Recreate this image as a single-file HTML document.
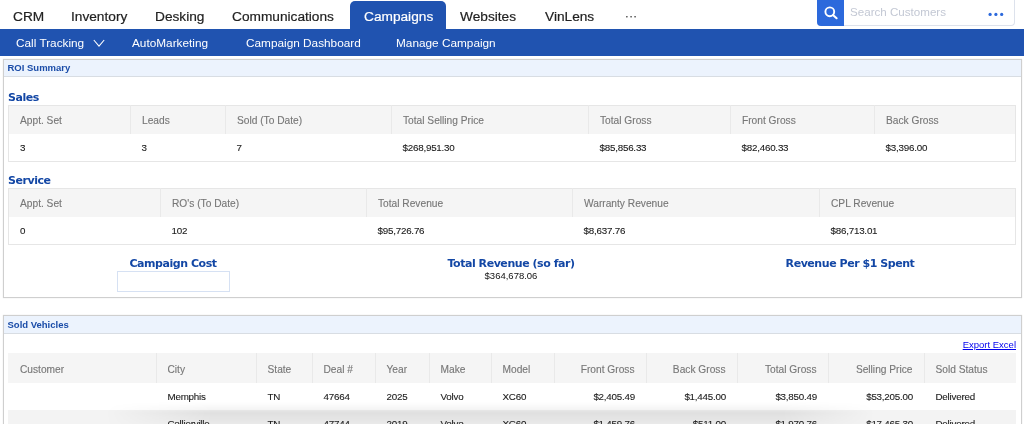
<!DOCTYPE html>
<html><head><meta charset="utf-8">
<style>
*{box-sizing:border-box;margin:0;padding:0}
html,body{width:1024px;height:424px;overflow:hidden;background:#fff;font-family:"Liberation Sans",sans-serif;}
body{position:relative}
#wrap{position:absolute;left:0;top:0;width:1024px;height:424px;overflow:hidden;will-change:transform}
.abs{position:absolute;white-space:nowrap}
#topnav{left:0;top:0;width:1024px;height:29px;background:#fff}
.tab{top:8px;font-size:13.7px;color:#222;-webkit-text-stroke:0.2px;line-height:18px}
#camp{left:350px;top:1px;width:96px;height:29px;background:#2053b0;border-radius:5px 5px 0 0}
#subnav{left:0;top:29px;width:1024px;height:27px;background:#2053b0}
.sub{top:35px;font-size:11.8px;color:#fff;line-height:16px}
.panel{background:#fff;border:1px solid #cfcfcf;box-shadow:0 0 1px #d8d8d8}
.phead{background:#ecf3fd;border-bottom:1px solid #d8dde3;height:16px;font-size:9.5px;font-weight:bold;color:#1a4ca8;line-height:15px;padding-left:3.5px}
.sect{font-family:"DejaVu Sans","Liberation Sans",sans-serif;font-weight:bold;font-size:11px;letter-spacing:-0.45px;color:#1347a5;line-height:14px}
table{border-collapse:collapse;table-layout:fixed;position:absolute}
th{background:#f5f5f5;font-weight:normal;color:#777;font-size:10.2px;-webkit-text-stroke:0.12px;text-align:left;padding-left:11px;border-left:1px solid #e9e9e9;height:28px;padding-top:2px}
th:first-child{border-left:none}
#sv th:first-child{padding-left:12px}
td{font-size:9.8px;letter-spacing:-0.22px;color:#1a1a1a;-webkit-text-stroke:0.1px #1a1a1a;padding-left:11px;padding-top:0;height:28px;background:#fff}
table.t{border:1px solid #e6e6e6}
.r{text-align:right;padding-right:11px;padding-left:0}
</style></head><body>
<div id="wrap">
<div id="topnav" class="abs"></div>
<div class="abs tab" style="left:13px">CRM</div>
<div class="abs tab" style="left:71px">Inventory</div>
<div class="abs tab" style="left:155px">Desking</div>
<div class="abs tab" style="left:232px">Communications</div>
<div id="camp" class="abs"></div>
<div class="abs tab" style="left:364px;color:#fff">Campaigns</div>
<div class="abs tab" style="left:460px">Websites</div>
<div class="abs tab" style="left:545px">VinLens</div>
<div class="abs tab" style="left:625px;top:7px;font-size:11px;color:#333;letter-spacing:0.5px">···</div>

<div class="abs" style="left:817px;top:0;width:198px;height:26px;background:#fff;border:1px solid #dde2ec;border-top:none;border-radius:0 0 4px 4px"></div>
<div class="abs" style="left:817px;top:0;width:26.5px;height:26px;background:#2c69dc;border-radius:0 0 0 4px"></div>
<svg class="abs" style="left:821px;top:3px" width="18" height="18" viewBox="0 0 18 18"><circle cx="8.8" cy="8.8" r="4.4" fill="none" stroke="#fff" stroke-width="1.9"/><line x1="12.2" y1="12.2" x2="15.6" y2="15.2" stroke="#fff" stroke-width="2.1" stroke-linecap="round"/></svg>
<div class="abs" style="left:850px;top:5px;font-size:11.6px;color:#c3c8d4;line-height:14px">Search Customers</div>
<svg class="abs" style="left:986px;top:10px" width="20" height="9" viewBox="0 0 20 9"><circle cx="4.1" cy="4.4" r="1.6" fill="#2c69dc"/><circle cx="9.9" cy="4.4" r="1.6" fill="#2c69dc"/><circle cx="15.7" cy="4.4" r="1.6" fill="#2c69dc"/></svg>

<div id="subnav" class="abs"></div>
<div class="abs sub" style="left:16px">Call Tracking</div>
<svg class="abs" style="left:93px;top:39px" width="12" height="9" viewBox="0 0 12 9"><path d="M0.8 1 L6 7.2 L11.2 1" fill="none" stroke="#fff" stroke-width="1.05"/></svg>
<div class="abs sub" style="left:132px">AutoMarketing</div>
<div class="abs sub" style="left:246px">Campaign Dashboard</div>
<div class="abs sub" style="left:396px">Manage Campaign</div>

<div class="abs panel" style="left:3px;top:59px;width:1019px;height:239px">
 <div class="phead" style="height:17px;line-height:15px">ROI Summary</div>
</div>
<div class="abs sect" style="left:8px;top:91px">Sales</div>
<table class="t" style="left:8px;top:105px;width:1008px">
<colgroup><col style="width:122px"><col style="width:95px"><col style="width:166px"><col style="width:197px"><col style="width:142px"><col style="width:144px"><col></colgroup>
<tr><th>Appt. Set</th><th>Leads</th><th>Sold (To Date)</th><th>Total Selling Price</th><th>Total Gross</th><th>Front Gross</th><th>Back Gross</th></tr>
<tr><td>3</td><td>3</td><td>7</td><td>$268,951.30</td><td>$85,856.33</td><td>$82,460.33</td><td>$3,396.00</td></tr>
</table>
<div class="abs sect" style="left:8px;top:174px">Service</div>
<table class="t" style="left:8px;top:188px;width:1008px">
<colgroup><col style="width:152px"><col style="width:206px"><col style="width:206px"><col style="width:247px"><col></colgroup>
<tr><th>Appt. Set</th><th>RO's (To Date)</th><th>Total Revenue</th><th>Warranty Revenue</th><th>CPL Revenue</th></tr>
<tr><td>0</td><td>102</td><td>$95,726.76</td><td>$8,637.76</td><td>$86,713.01</td></tr>
</table>
<div class="abs sect" style="left:73px;top:257px;width:200px;text-align:center">Campaign Cost</div>
<div class="abs" style="left:117px;top:271px;width:113px;height:21px;border:1px solid #d6e1f3;background:#fff"></div>
<div class="abs sect" style="left:411px;top:257px;width:200px;text-align:center">Total Revenue (so far)</div>
<div class="abs" style="left:411px;top:270px;width:200px;text-align:center;font-size:9.5px;color:#111;line-height:12px">$364,678.06</div>
<div class="abs sect" style="left:750px;top:257px;width:200px;text-align:center">Revenue Per $1 Spent</div>

<div class="abs panel" style="left:3px;top:315px;width:1019px;height:120px">
 <div class="phead" style="height:18px;line-height:18px">Sold Vehicles</div>
</div>
<div class="abs" style="left:916px;top:338.5px;width:100px;text-align:right;font-size:9.5px;color:#0000ee;text-decoration:underline;line-height:12px">Export Excel</div>
<table id="sv" style="left:8px;top:353px;width:1008px">
<colgroup><col style="width:148px"><col style="width:100px"><col style="width:56px"><col style="width:63px"><col style="width:54px"><col style="width:62px"><col style="width:63px"><col style="width:92px"><col style="width:91px"><col style="width:91px"><col style="width:96px"><col></colgroup>
<tr style="height:30px"><th>Customer</th><th>City</th><th>State</th><th>Deal #</th><th>Year</th><th>Make</th><th>Model</th><th class="r">Front Gross</th><th class="r">Back Gross</th><th class="r">Total Gross</th><th class="r">Selling Price</th><th>Sold Status</th></tr>
<tr style="height:27px"><td></td><td>Memphis</td><td>TN</td><td>47664</td><td>2025</td><td>Volvo</td><td>XC60</td><td class="r">$2,405.49</td><td class="r">$1,445.00</td><td class="r">$3,850.49</td><td class="r">$53,205.00</td><td>Delivered</td></tr>
<tr class="alt" style="height:27px"><td></td><td>Collierville</td><td>TN</td><td>47744</td><td>2019</td><td>Volvo</td><td>XC60</td><td class="r">$1,459.76</td><td class="r">$511.00</td><td class="r">$1,970.76</td><td class="r">$17,465.30</td><td>Delivered</td></tr>
</table>
<style>#sv th{height:30px}#sv td{height:27px;padding-top:0;padding-bottom:1px;padding-left:11.5px}#sv td.r{padding-left:0}#sv tr.alt td{background:#f3f3f3}</style>
<div class="abs" style="left:105px;top:402px;width:770px;height:22px;background:linear-gradient(to bottom,rgba(0,0,0,0) 0,rgba(0,0,0,0.035) 30%,rgba(0,0,0,0.075) 50%,rgba(0,0,0,0.04) 100%);-webkit-mask-image:linear-gradient(to right,transparent 0,#000 14%,#000 88%,transparent 100%);mask-image:linear-gradient(to right,transparent 0,#000 14%,#000 88%,transparent 100%)"></div>
</div>
</body></html>
